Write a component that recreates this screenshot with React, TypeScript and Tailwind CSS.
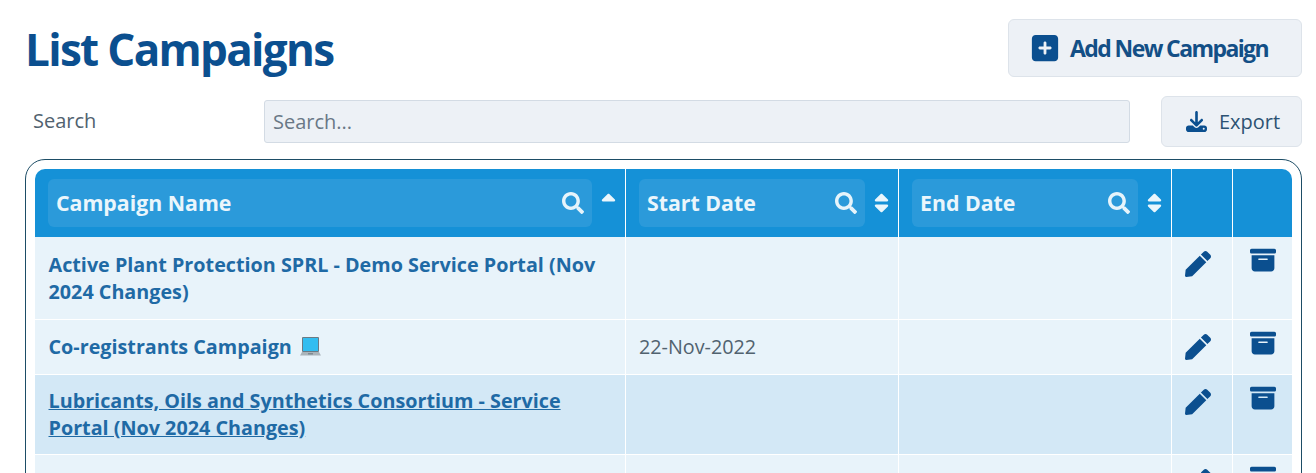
import React from "react";
import { FaSearch, FaSort, FaSortUp, FaPen } from "react-icons/fa";
import { FaBoxArchive, FaSquarePlus, FaDownload } from "react-icons/fa6";

function HeaderCell({ label, sort }: { label: string; sort: "up" | "both" }) {
  return (
    <th className="p-0 border-r border-white align-middle font-bold text-left">
      <div className="flex items-center h-[68px] pl-[13px] pr-[8px]">
        <div className="flex-1 h-[48px] rounded-[6px] bg-[#2b9ada] flex items-center justify-between pl-2 pr-[8px]">
          <span className="text-[21.3px] text-[#eaf6fc] font-bold">{label}</span>
          <FaSearch className="text-[22px] text-[#e6f4fb]" />
        </div>
        <div className="w-[17px] ml-[8px] flex justify-center text-[#eaf6fc]">
          {sort === "up" ? <FaSortUp className="text-[24px]" /> : <FaSort className="text-[24px]" />}
        </div>
      </div>
    </th>
  );
}

function Laptop() {
  return (
    <svg width="21" height="21" viewBox="0 0 21 21" className="inline-block align-[-3px] ml-[3px]">
      <rect x="2" y="1" width="17" height="15" rx="1" fill="#6b7a84" />
      <rect x="3" y="2" width="15" height="13" fill="#33bdf0" />
      <path d="M2 16h17l2 3.5H0z" fill="#aab4ba" />
      <rect x="8" y="17" width="5" height="1.5" fill="#7f8b93" />
    </svg>
  );
}

function ActionCells() {
  return (
    <>
      <td className="border-r border-b border-white align-top">
        <div className="flex justify-center pt-[14px] pr-[12px] pl-[3px]">
          <FaPen className="text-[26px] text-[#0b4f8f]" />
        </div>
      </td>
      <td className="border-b border-white align-top">
        <div className="flex justify-center pt-[10px]">
          <FaBoxArchive className="text-[26px] text-[#0b4f8f]" />
        </div>
      </td>
    </>
  );
}

const cellName = "border-r border-b border-white align-top pl-[13.5px] pr-[14px] text-[19.75px] leading-[27px] font-bold text-[#1f6aa5]";
const cell = "border-r border-b border-white align-top pl-[13px] text-[19.75px] leading-[27px] text-[#51626f]";

export default function App() {
  return (
    <div className="h-[473px] w-[1316px] overflow-hidden bg-white font-['Open_Sans',sans-serif] relative">
      <div className="flex items-start justify-between pl-[25px] pr-[14px] pt-[19px]">
        <h1 className="text-[44px] leading-[60px] font-bold text-[#0b4f8f] tracking-[-1.68px]">List Campaigns</h1>
        <button className="w-[294px] h-[58px] rounded-[6px] bg-[#edf1f6] border border-[#dde3ea] flex items-center justify-start pl-[21px] gap-[10px]">
          <FaSquarePlus className="text-[30px] text-[#0b4f8f]" />
          <span className="text-[23px] font-bold text-[#134f86] tracking-[-1.6px]">Add New Campaign</span>
        </button>
      </div>
      <div className="flex items-center pl-[33px] pr-[14px] mt-[17px] h-[51px]">
        <label className="w-[231px] text-[20px] leading-[27px] text-[#51626f] -mt-[2px]">Search</label>
        <input
          readOnly
          placeholder="Search..."
          className="w-[866px] h-[43px] bg-[#edf1f6] border border-[#d3dbe4] rounded-[3px] px-2 text-[20px] placeholder:text-[#697886] outline-none"
        />
        <button className="ml-[31px] w-[141px] h-[51px] rounded-[6px] bg-[#edf1f6] border border-[#dde3ea] flex items-center justify-start pl-[24px] gap-[12px]">
          <FaDownload className="text-[21px] text-[#0b4f8f]" />
          <span className="text-[20px] text-[#2c5273]">Export</span>
        </button>
      </div>
      <div className="mx-[25px] mt-[12px] w-[1277px] border border-[#1d4d66] rounded-[20px] p-[9px] h-[400px]">
        <table className="table-fixed border-separate border-spacing-0 w-[1257px]">
          <colgroup>
            <col className="w-[591px]" />
            <col className="w-[273px]" />
            <col className="w-[273px]" />
            <col className="w-[61px]" />
            <col className="w-[59px]" />
          </colgroup>
          <thead>
            <tr className="bg-[#1591d7]">
              <th className="p-0 border-r border-white rounded-tl-[10px] align-middle font-bold text-left">
                <div className="flex items-center h-[68px] pl-[13px] pr-[8px]">
                  <div className="flex-1 h-[48px] rounded-[6px] bg-[#2b9ada] flex items-center justify-between pl-2 pr-[8px]">
                    <span className="text-[21.3px] text-[#eaf6fc] font-bold">Campaign Name</span>
                    <FaSearch className="text-[22px] text-[#e6f4fb]" />
                  </div>
                  <div className="w-[17px] ml-[8px] flex justify-center text-[#eaf6fc]">
                    <FaSortUp className="text-[24px]" />
                  </div>
                </div>
              </th>
              <HeaderCell label="Start Date" sort="both" />
              <HeaderCell label="End Date" sort="both" />
              <th className="border-r border-white" />
              <th className="rounded-tr-[10px]" />
            </tr>
          </thead>
          <tbody>
            <tr className="h-[83px] bg-[#e8f3fa]">
              <td className={cellName + " pt-[14px]"}>Active Plant Protection SPRL - Demo Service Portal (Nov 2024 Changes)</td>
              <td className={cell} />
              <td className={cell} />
              <ActionCells />
            </tr>
            <tr className="h-[55px] bg-[#e8f3fa]">
              <td className={cellName + " pt-[13px]"}>Co-registrants Campaign <Laptop /></td>
              <td className={cell + " pt-[13px]"}>22-Nov-2022</td>
              <td className={cell} />
              <ActionCells />
            </tr>
            <tr className="h-[80px] bg-[#d3e8f6]">
              <td className={cellName + " pt-[12px]"}><a className="underline">Lubricants, Oils and Synthetics Consortium - Service Portal (Nov 2024 Changes)</a></td>
              <td className={cell} />
              <td className={cell} />
              <ActionCells />
            </tr>
            <tr className="h-[60px] bg-[#e8f3fa]">
              <td className={cellName} />
              <td className={cell} />
              <td className={cell} />
              <ActionCells />
            </tr>
          </tbody>
        </table>
      </div>
    </div>
  );
}
